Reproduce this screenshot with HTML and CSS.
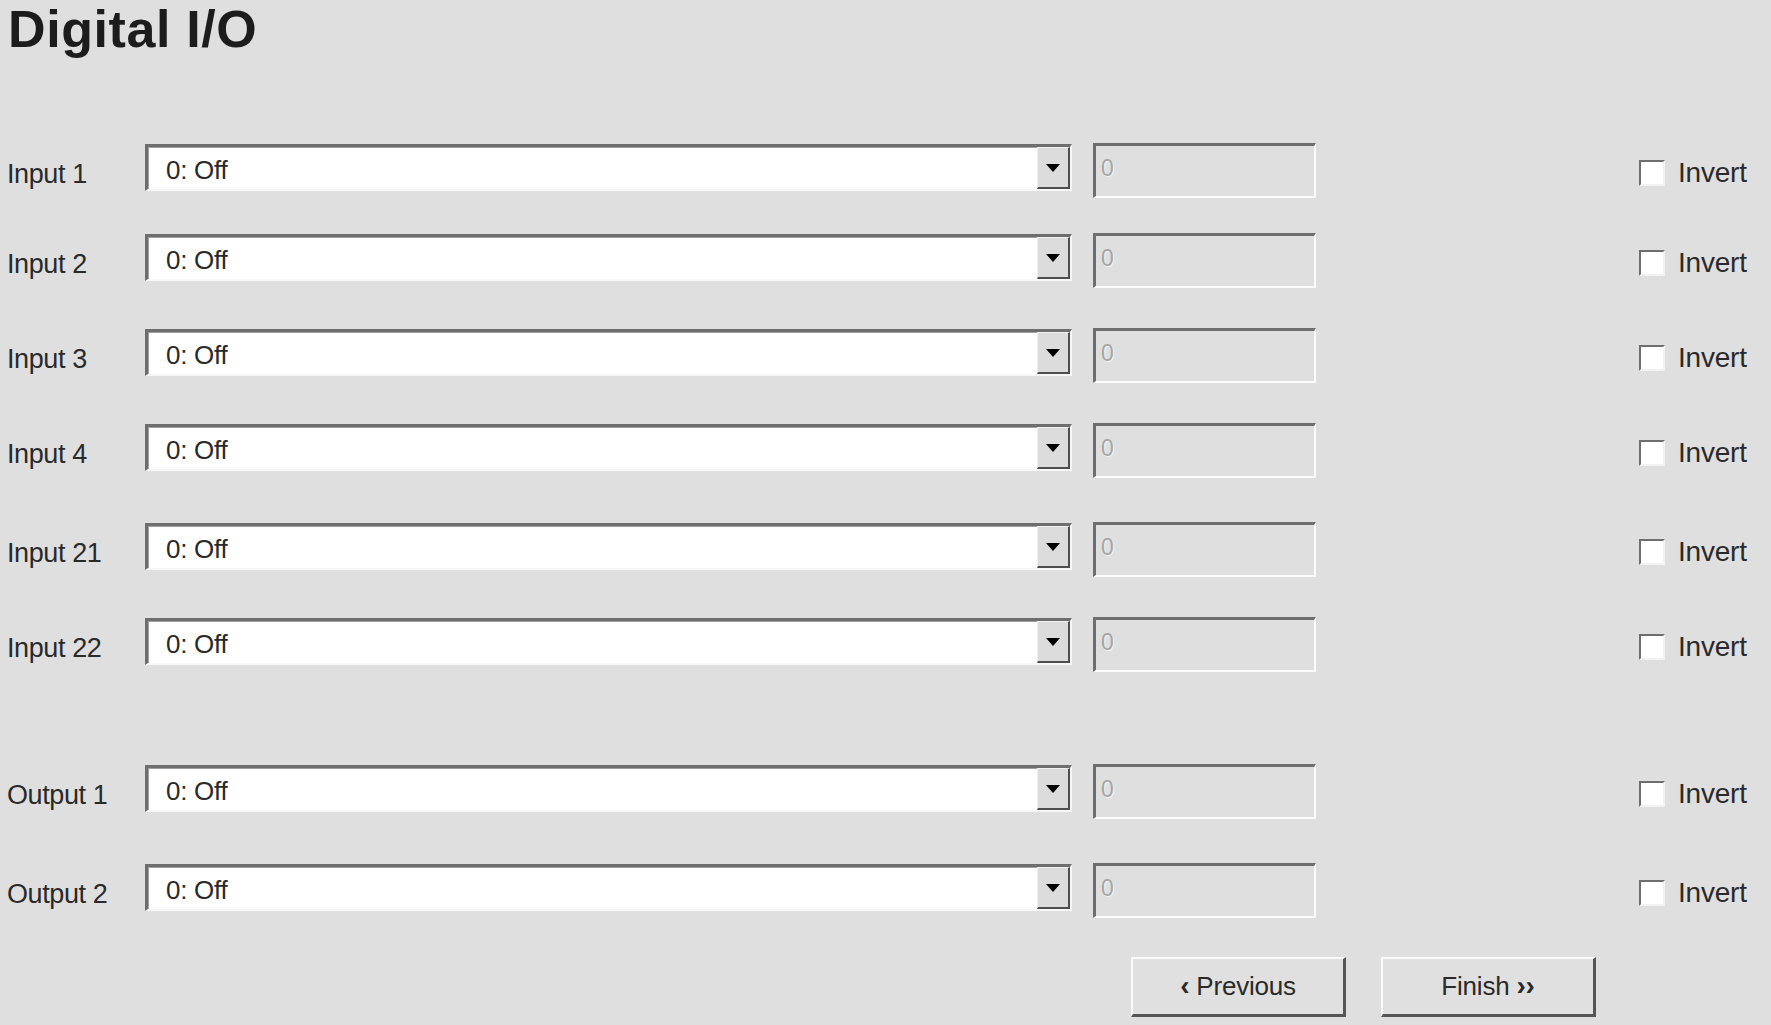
FILE: index.html
```html
<!DOCTYPE html>
<html>
<head>
<meta charset="utf-8">
<link rel="stylesheet" href="styles.css">
</head>
<body>
<div class="page">
  <h1 class="title">Digital I/O</h1>
  <div class="rows">
    <div class="row r1">
      <div class="label">Input 1</div>
      <div class="select"><span class="select-value">0: Off</span><span class="select-btn"><svg width="14" height="8" viewBox="0 0 14 8"><polygon points="0,0 14,0 7,8" fill="#000"/></svg></span></div>
      <div class="field"><span class="field-value">0</span></div>
      <label class="check"><span class="box"></span><span class="check-text">Invert</span></label>
    </div>
    <div class="row r2">
      <div class="label">Input 2</div>
      <div class="select"><span class="select-value">0: Off</span><span class="select-btn"><svg width="14" height="8" viewBox="0 0 14 8"><polygon points="0,0 14,0 7,8" fill="#000"/></svg></span></div>
      <div class="field"><span class="field-value">0</span></div>
      <label class="check"><span class="box"></span><span class="check-text">Invert</span></label>
    </div>
    <div class="row r3">
      <div class="label">Input 3</div>
      <div class="select"><span class="select-value">0: Off</span><span class="select-btn"><svg width="14" height="8" viewBox="0 0 14 8"><polygon points="0,0 14,0 7,8" fill="#000"/></svg></span></div>
      <div class="field"><span class="field-value">0</span></div>
      <label class="check"><span class="box"></span><span class="check-text">Invert</span></label>
    </div>
    <div class="row r4">
      <div class="label">Input 4</div>
      <div class="select"><span class="select-value">0: Off</span><span class="select-btn"><svg width="14" height="8" viewBox="0 0 14 8"><polygon points="0,0 14,0 7,8" fill="#000"/></svg></span></div>
      <div class="field"><span class="field-value">0</span></div>
      <label class="check"><span class="box"></span><span class="check-text">Invert</span></label>
    </div>
    <div class="row r5">
      <div class="label">Input 21</div>
      <div class="select"><span class="select-value">0: Off</span><span class="select-btn"><svg width="14" height="8" viewBox="0 0 14 8"><polygon points="0,0 14,0 7,8" fill="#000"/></svg></span></div>
      <div class="field"><span class="field-value">0</span></div>
      <label class="check"><span class="box"></span><span class="check-text">Invert</span></label>
    </div>
    <div class="row r6">
      <div class="label">Input 22</div>
      <div class="select"><span class="select-value">0: Off</span><span class="select-btn"><svg width="14" height="8" viewBox="0 0 14 8"><polygon points="0,0 14,0 7,8" fill="#000"/></svg></span></div>
      <div class="field"><span class="field-value">0</span></div>
      <label class="check"><span class="box"></span><span class="check-text">Invert</span></label>
    </div>
    <div class="row r7">
      <div class="label">Output 1</div>
      <div class="select"><span class="select-value">0: Off</span><span class="select-btn"><svg width="14" height="8" viewBox="0 0 14 8"><polygon points="0,0 14,0 7,8" fill="#000"/></svg></span></div>
      <div class="field"><span class="field-value">0</span></div>
      <label class="check"><span class="box"></span><span class="check-text">Invert</span></label>
    </div>
    <div class="row r8">
      <div class="label">Output 2</div>
      <div class="select"><span class="select-value">0: Off</span><span class="select-btn"><svg width="14" height="8" viewBox="0 0 14 8"><polygon points="0,0 14,0 7,8" fill="#000"/></svg></span></div>
      <div class="field"><span class="field-value">0</span></div>
      <label class="check"><span class="box"></span><span class="check-text">Invert</span></label>
    </div>
  </div>
  <div class="actions">
    <button class="btn"><b class="chev">&lsaquo;</b> Previous</button>
    <button class="btn">Finish <b class="chev">&rsaquo;&rsaquo;</b></button>
  </div>
</div>
</body>
</html>
```

FILE: styles.css
```css
html, body {
  margin: 0;
  padding: 0;
  background: #dfdfdf;
}

body {
  font-family: "Liberation Sans", Arial, sans-serif;
  color: #2a2a2a;
  width: 1771px;
  height: 1025px;
  overflow: hidden;
}

.page {
  padding-left: 7px;
}

.title {
  margin: 0 0 0 1px;
  font-size: 52px;
  font-weight: bold;
  letter-spacing: 0.6px;
  line-height: 1.13;
  color: #1c1c1c;
}

.rows {
  display: flex;
  flex-direction: column;
}

.row {
  display: flex;
  align-items: center;
  height: 55px;
}

.r1 { margin-top: 84px; }
.r2 { margin-top: 35px; }
.r3 { margin-top: 40px; }
.r4 { margin-top: 40px; }
.r5 { margin-top: 44px; }
.r6 { margin-top: 40px; }
.r7 { margin-top: 92px; }
.r8 { margin-top: 44px; }

.label {
  width: 138px;
  font-size: 27px;
  letter-spacing: -0.4px;
  color: #2a2a2a;
  margin-top: 9px;
}

.select {
  box-sizing: border-box;
  width: 927px;
  height: 47px;
  margin-top: -6px;
  display: flex;
  background: #fff;
  border-top: 3px solid #6e6e6e;
  border-left: 3px solid #6e6e6e;
  border-right: 2px solid #f7f7f7;
  border-bottom: 2px solid #f7f7f7;
  box-shadow: inset 1px 1px 0 #a0a0a0;
}

.select-value {
  flex: 1;
  padding-left: 18px;
  padding-top: 3px;
  font-size: 26px;
  line-height: 40px;
  color: #2a2a2a;
  letter-spacing: -0.3px;
}

.select-btn {
  box-sizing: border-box;
  width: 33px;
  display: flex;
  align-items: center;
  justify-content: center;
  background: #dcdcdc;
  border-top: 1px solid #f0f0f0;
  border-left: 1px solid #f0f0f0;
  border-right: 2px solid #4e4e4e;
  border-bottom: 2px solid #4e4e4e;
  padding-top: 2px;
}

.field {
  box-sizing: border-box;
  width: 223px;
  height: 55px;
  margin-left: 21px;
  align-self: flex-start;
  background: #dfdfdf;
  border-top: 3px solid #6e6e6e;
  border-left: 3px solid #6e6e6e;
  border-right: 2px solid #fbfbfb;
  border-bottom: 2px solid #fbfbfb;
  padding: 7px 0 0 5px;
}

.field-value {
  font-size: 23px;
  line-height: 30px;
  color: #a6a6a6;
  text-shadow: 1px 1px 0 #f4f4f4;
}

.check {
  display: flex;
  align-items: center;
  margin-left: 323px;
  margin-top: 6px;
}

.box {
  box-sizing: border-box;
  width: 26px;
  height: 26px;
  background: #fff;
  border-top: 2px solid #6e6e6e;
  border-left: 2px solid #6e6e6e;
  border-right: 2px solid #f2f2f2;
  border-bottom: 2px solid #f2f2f2;
}

.check-text {
  margin-left: 13px;
  font-size: 28px;
  letter-spacing: -0.2px;
  color: #2a2a2a;
  margin-top: 0;
}

.actions {
  display: flex;
  gap: 35px;
  margin-top: 39px;
  margin-left: 1124px;
}

.btn {
  box-sizing: border-box;
  width: 215px;
  height: 60px;
  background: #e0e0e0;
  font-family: "Liberation Sans", Arial, sans-serif;
  font-size: 26px;
  color: #2a2a2a;
  border-top: 2px solid #fbfbfb;
  border-left: 2px solid #fbfbfb;
  border-right: 3px solid #555;
  border-bottom: 3px solid #555;
  padding: 0;
  letter-spacing: -0.2px;
}

.chev {
  font-weight: bold;
  font-size: 28px;
}
```
